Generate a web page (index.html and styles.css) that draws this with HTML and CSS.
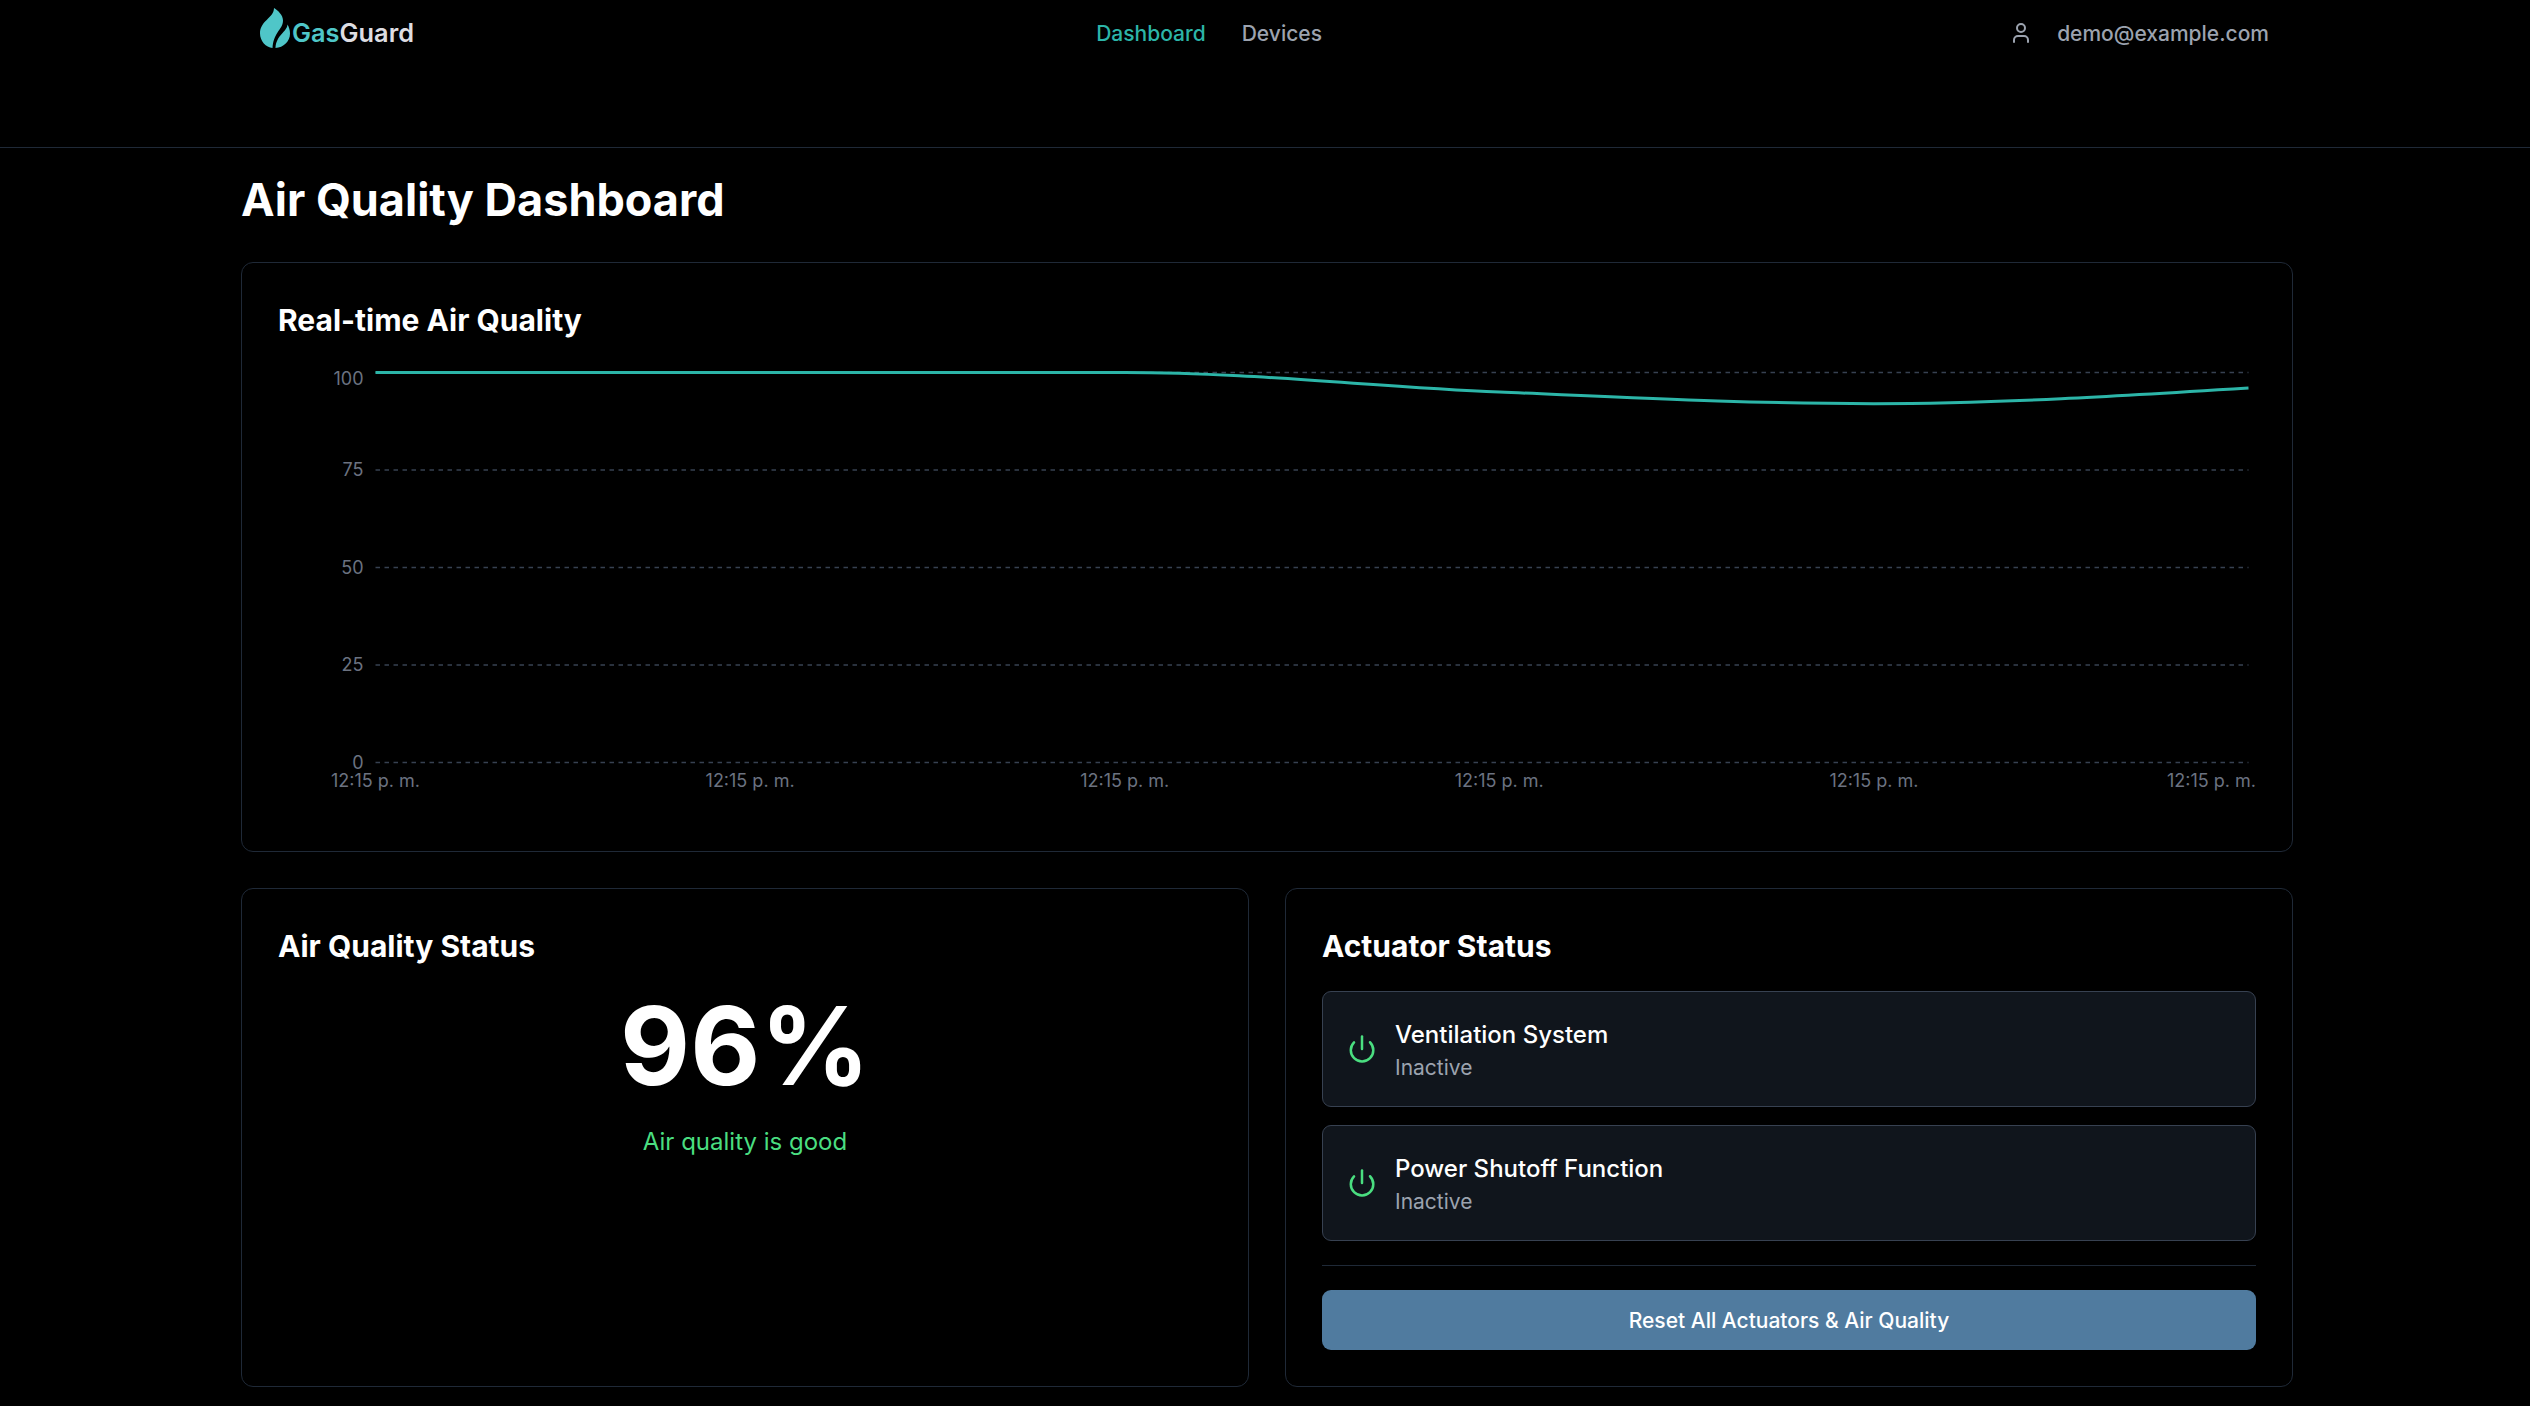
FILE: index.html
```html
<!DOCTYPE html>
<html lang="en">
<head>
<meta charset="utf-8">
<title>GasGuard</title>
<link rel="stylesheet" href="styles.css">
</head>
<body>
<header class="header">
  <div class="header-inner">
    <a class="logo">
      <svg width="160" height="52" viewBox="0 0 160 52" aria-label="GasGuard">
        <path class="logo-mark" d="M15 8C15 18 1 20.500 1 33.500C1 41 7 47.500 13.500 48C14 41 15.500 37.500 18.500 32.500C21 28.500 24 25.500 24 20.500C24 15 19 10.500 15 8Z"/>
        <path class="logo-mark" d="M28.500 24.500C28 32 17 35 16.500 48C24.500 47.500 31 41.500 31 33.500C31 30 30 27 28.500 24.500Z"/>
        <text class="logo-text" x="33" y="42" textLength="122" lengthAdjust="spacingAndGlyphs"><tspan class="logo-gas">Gas</tspan><tspan class="logo-guard">Guard</tspan></text>
      </svg>
    </a>
    <nav class="nav">
      <a class="nav-link active">Dashboard</a>
      <a class="nav-link">Devices</a>
    </nav>
    <div class="user">
      <svg class="icon user-icon" viewBox="0 0 24 24"><path d="M19 21v-2a4 4 0 0 0-4-4H9a4 4 0 0 0-4 4v2"/><circle cx="12" cy="7" r="4"/></svg>
      <span>demo@example.com</span>
    </div>
  </div>
</header>
<main class="main">
  <h1 class="page-title">Air Quality Dashboard</h1>
  <section class="card">
    <h2 class="card-title">Real-time Air Quality</h2>
    <svg class="chart" width="1978" height="450" viewBox="0 0 1978 450">
      <g class="grid">
        <path d="M97.500 7.500H1970.500"/>
        <path d="M97.500 105H1970.500"/>
        <path d="M97.500 202.500H1970.500"/>
        <path d="M97.500 300H1970.500"/>
        <path d="M97.500 397.500H1970.500"/>
      </g>
      <g class="tick tick-y">
        <text x="85.500" y="20">100</text>
        <text x="85.500" y="111.400">75</text>
        <text x="85.500" y="208.900">50</text>
        <text x="85.500" y="306.400">25</text>
        <text x="85.500" y="403.900">0</text>
      </g>
      <g class="tick tick-x">
        <text x="97.500" y="422">12:15 p. m.</text>
        <text x="472.100" y="422">12:15 p. m.</text>
        <text x="846.700" y="422">12:15 p. m.</text>
        <text x="1221.300" y="422">12:15 p. m.</text>
        <text x="1595.900" y="422">12:15 p. m.</text>
        <text x="1933.500" y="422">12:15 p. m.</text>
      </g>
      <path class="series" d="M97.500 7.500H846.700C971.570 7.500 1096.430 21.800 1221.300 27C1346.170 32.200 1471.030 38.700 1595.900 38.700C1720.770 38.700 1845.630 30.900 1970.500 23.100"/>
    </svg>
  </section>
  <div class="columns">
    <section class="card">
      <h2 class="card-title">Air Quality Status</h2>
      <div class="status">
        <div class="status-value">96%</div>
        <p class="status-text">Air quality is good</p>
      </div>
    </section>
    <section class="card">
      <h2 class="card-title">Actuator Status</h2>
      <div class="actuators">
        <div class="actuator">
          <svg class="icon power-icon" viewBox="0 0 24 24"><path d="M12 2v10"/><path d="M18.400 6.600a9 9 0 1 1-12.770.040"/></svg>
          <div class="actuator-body">
            <div class="actuator-name">Ventilation System</div>
            <div class="actuator-state">Inactive</div>
          </div>
        </div>
        <div class="actuator">
          <svg class="icon power-icon" viewBox="0 0 24 24"><path d="M12 2v10"/><path d="M18.400 6.600a9 9 0 1 1-12.770.040"/></svg>
          <div class="actuator-body">
            <div class="actuator-name">Power Shutoff Function</div>
            <div class="actuator-state">Inactive</div>
          </div>
        </div>
      </div>
      <div class="actions">
        <button class="reset">Reset All Actuators &amp; Air Quality</button>
      </div>
    </section>
  </div>
</main>
</body>
</html>
```

FILE: styles.css
```css
* { box-sizing: border-box; margin: 0; padding: 0; }
body {
  background: #000;
  color: #fff;
  font-family: Inter, "Liberation Sans", sans-serif;
  min-height: 1406px;
  overflow: hidden;
}
.header { height: 148px; border-bottom: 1px solid #1f2937; }
.header-inner {
  display: flex;
  justify-content: space-between;
  align-items: flex-start;
  margin: 0 261px 0 259px;
}
.logo { display: block; width: 150px; height: 52px; }
.logo svg { display: block; }
.logo-mark { fill: #4fc6c8; }
.logo-text { font-family: Inter, sans-serif; font-size: 25px; font-weight: 600; }
.logo-gas { fill: #4fc6c8; }
.logo-guard { fill: #dddde2; }
.nav { display: flex; gap: 36px; padding-top: 19px; }
.nav-link, .user { font-size: 21px; line-height: 30px; font-weight: 500; color: #9ca3af; }
.nav-link.active { color: #2cb5a8; }
.user { display: flex; align-items: center; gap: 24px; padding-top: 19px; }
.icon { fill: none; stroke: currentColor; stroke-width: 2; stroke-linecap: round; stroke-linejoin: round; flex: none; }
.user-icon { width: 24px; height: 24px; margin-bottom: 2px; }
.main { width: 2052px; margin-left: 241px; padding-top: 25px; }
.page-title { font-size: 45px; line-height: 54px; font-weight: 700; margin-bottom: 35px; }
.card { border: 1px solid #1f2937; border-radius: 12px; padding: 36px; }
.card-title { font-size: 30px; line-height: 42px; font-weight: 700; margin-bottom: 24px; }
.chart { display: block; }
.grid { stroke: #374151; stroke-width: 1.5; stroke-dasharray: 4.5 4.5; }
.tick { fill: #6b7280; font-size: 18px; }
.tick-y { text-anchor: end; }
.tick-x { text-anchor: middle; }
.series { fill: none; stroke: #2cb5a8; stroke-width: 3; }
.columns { display: grid; grid-template-columns: 1fr 1fr; gap: 36px; margin-top: 36px; }
.status { padding-top: 1px; text-align: center; }
.status-value { font-size: 108px; line-height: 108px; font-weight: 700; }
.status-text { margin-top: 24px; font-size: 24px; line-height: 36px; color: #4ade80; }
.actuators { display: flex; flex-direction: column; gap: 18px; }
.actuator {
  display: flex;
  align-items: center;
  gap: 18px;
  height: 116px;
  padding: 0 24px;
  background: #10151c;
  border: 1px solid #374151;
  border-radius: 9px;
}
.power-icon { width: 30px; height: 30px; color: #4ade80; }
.actuator-body { padding-top: 2px; }
.actuator-name { font-size: 24px; line-height: 36px; font-weight: 500; }
.actuator-state { font-size: 21px; line-height: 30px; color: #9ca3af; }
.actions { margin-top: 24px; border-top: 1px solid #1f2937; padding-top: 24px; }
.reset {
  display: block;
  width: 100%;
  height: 60px;
  padding-top: 2px;
  border: 0;
  border-radius: 9px;
  background: #507b9f;
  color: #fff;
  font: 500 21px/30px Inter, "Liberation Sans", sans-serif;
}
```
